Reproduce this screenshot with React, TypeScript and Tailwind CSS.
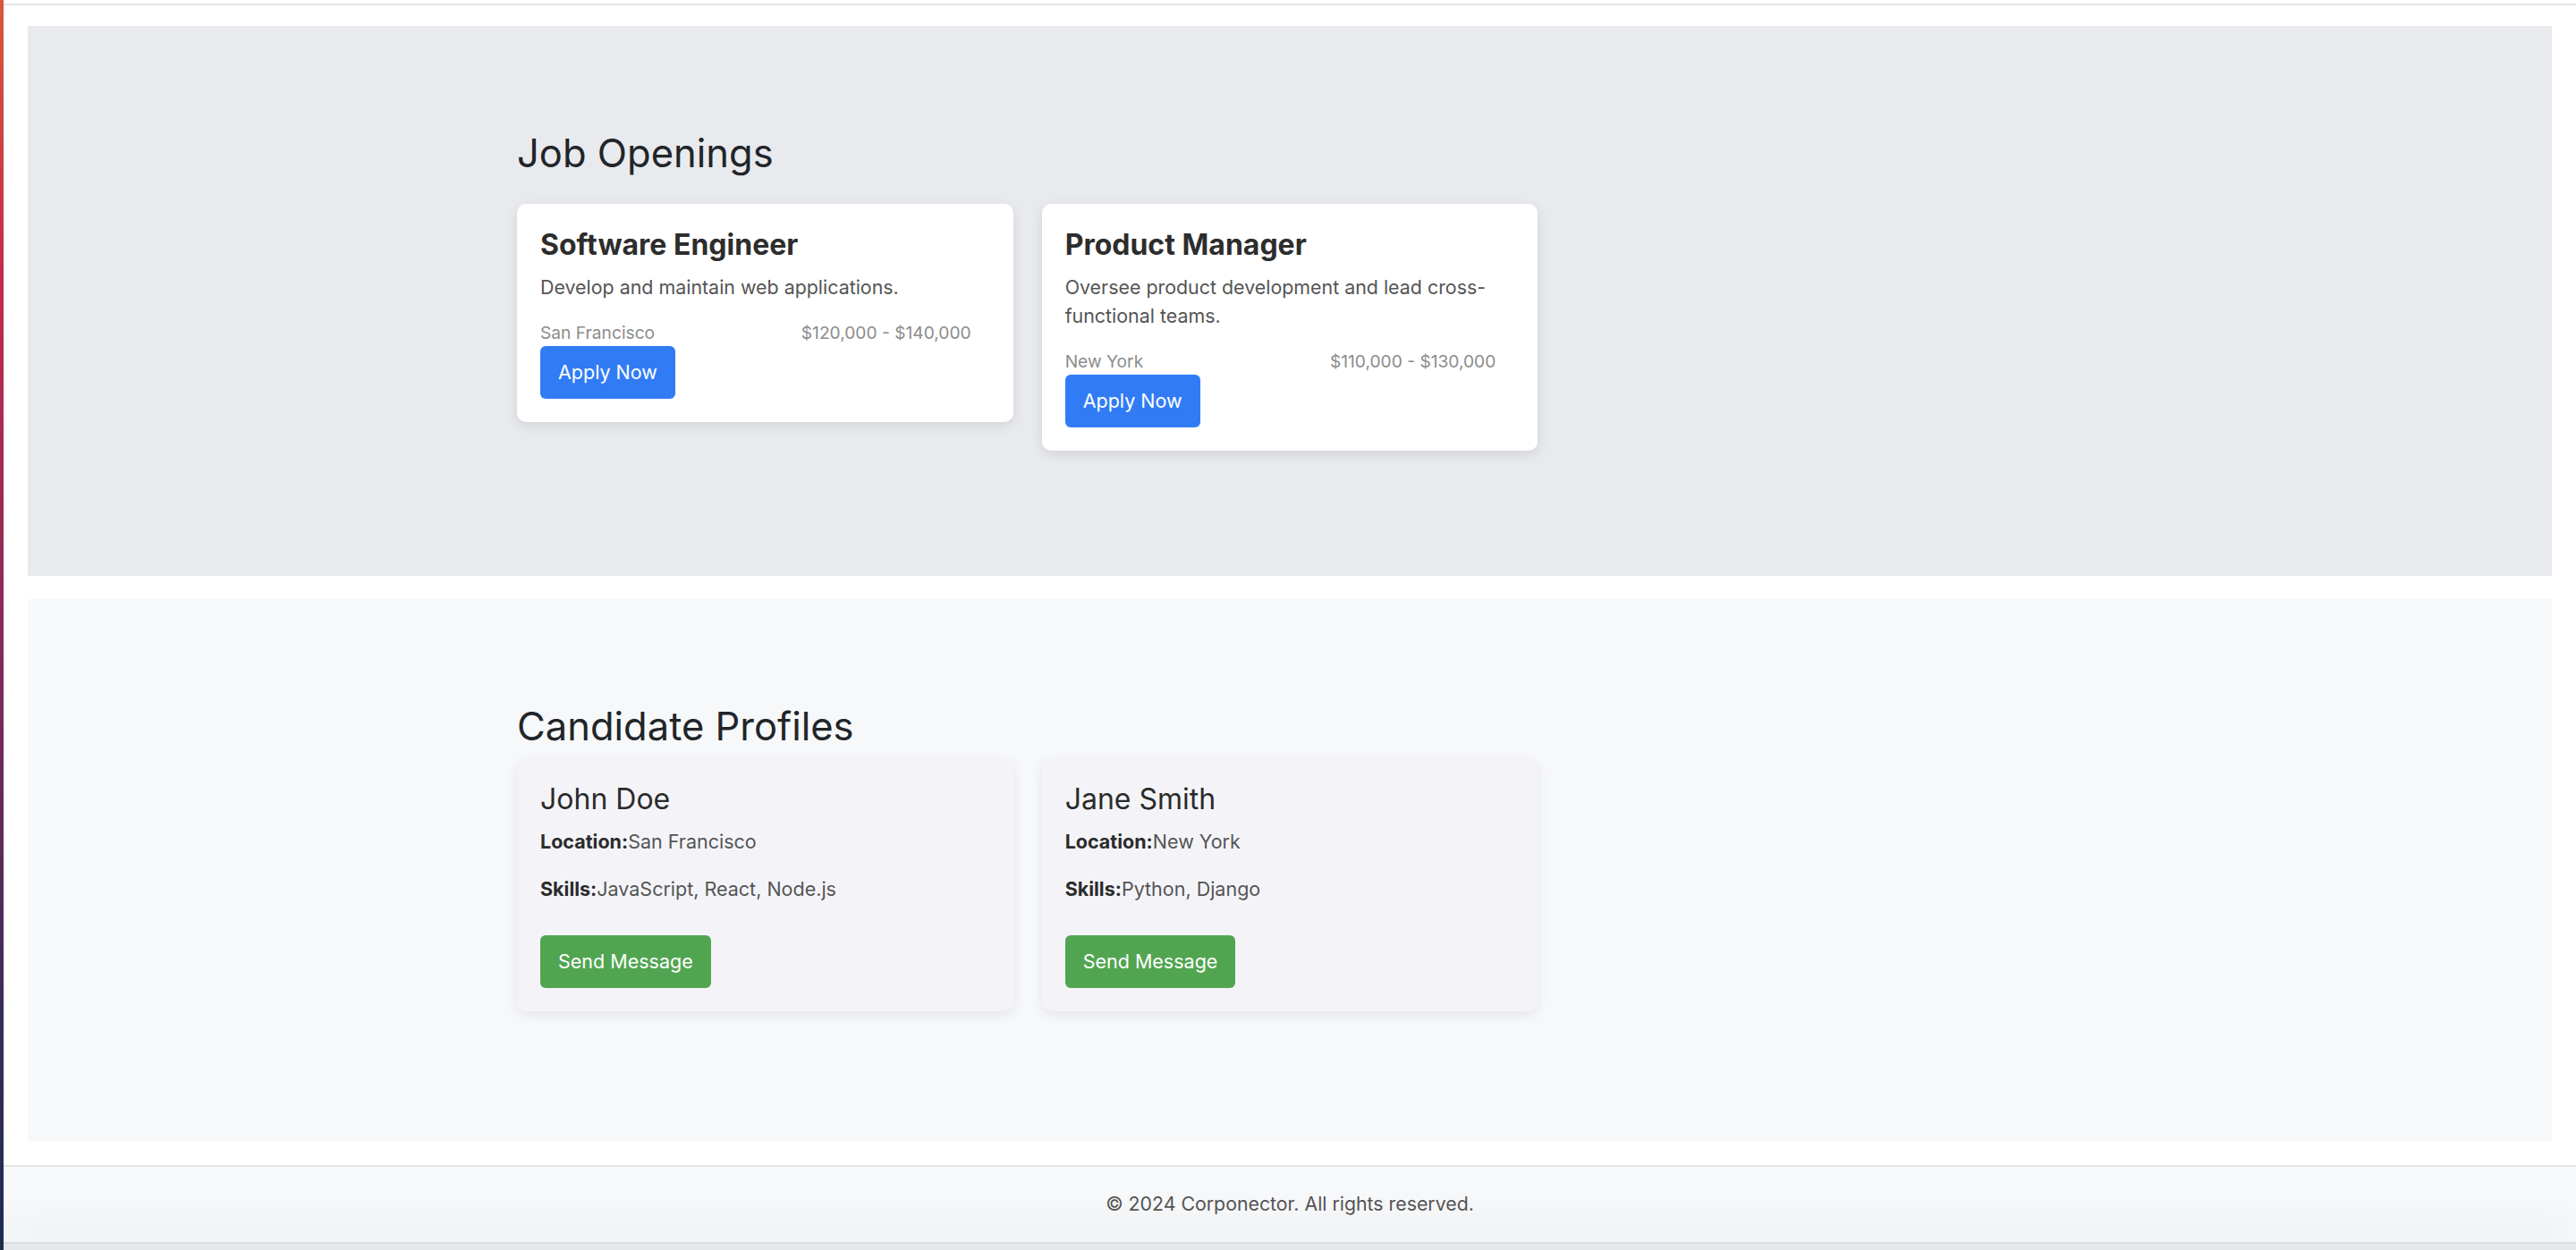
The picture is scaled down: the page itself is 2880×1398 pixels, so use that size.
const jobs = [
  {
    title: 'Software Engineer',
    description: 'Develop and maintain web applications.',
    location: 'San Francisco',
    salary: '$120,000 - $140,000',
  },
  {
    title: 'Product Manager',
    description: 'Oversee product development and lead cross-functional teams.',
    location: 'New York',
    salary: '$110,000 - $130,000',
  },
];

const candidates = [
  { name: 'John Doe', location: 'San Francisco', skills: 'JavaScript, React, Node.js' },
  { name: 'Jane Smith', location: 'New York', skills: 'Python, Django' },
];

export default function App() {
  return (
    <div className="flex min-h-[1398px] bg-white font-['Inter','Noto_Sans',sans-serif]">
      {/* window edge */}
      <div className="w-[4px] shrink-0 bg-[linear-gradient(to_bottom,#d65a3a_0%,#c52a4c_22%,#7d2a5c_55%,#3b2c5a_80%,#1e2e4e_100%)]" />

      <div className="flex-1 flex flex-col">
        <div className="h-[6px] border-b-2 border-[#e4e4e6]" />

        {/* Job openings */}
        <section className="mx-[27px] mt-[23px] bg-[#e9eaee] pt-[116px] pb-[140px]">
          <div className="w-[1728px] mx-auto">
            <h2 className="text-[43.5px] leading-[53px] font-normal text-[#212529]">Job Openings</h2>
            <div className="mt-[30px] grid grid-cols-3 gap-[32px] items-start">
              {jobs.map((job) => (
                <div
                  key={job.title}
                  className="bg-white rounded-[10px] p-[26px] shadow-[0_4px_14px_rgba(0,0,0,0.1)]"
                >
                  <h3 className="text-[32px] leading-[40px] font-bold text-[#2d2d2d]">{job.title}</h3>
                  <p className="mt-[11px] text-[21.4px] leading-[32px] text-[#555]">{job.description}</p>
                  <div className="mt-[21px] flex justify-between pr-[21px] text-[19.2px] leading-[28px] text-[#8c8c8c]">
                    <span>{job.location}</span>
                    <span>{job.salary}</span>
                  </div>
                  <button className="mt-[1px] h-[59px] px-[20px] rounded-[6px] bg-[#317cf5] text-white text-[21.5px]">
                    Apply Now
                  </button>
                </div>
              ))}
            </div>
          </div>
        </section>

        {/* Candidate profiles */}
        <section className="mx-[27px] mt-[26px] bg-[#f7f8fa] pt-[116px] pb-[145px]">
          <div className="w-[1728px] mx-auto">
            <h2 className="text-[43.5px] leading-[53px] font-normal text-[#212529]">Candidate Profiles</h2>
            <div className="mt-[10px] grid grid-cols-3 gap-[32px] items-start">
              {candidates.map((c) => (
                <div
                  key={c.name}
                  className="bg-[#f4f4f8] rounded-[10px] p-[26px] shadow-[0_4px_14px_rgba(0,0,0,0.08)]"
                >
                  <h3 className="text-[32px] leading-[37px] text-[#2b2b2b]">{c.name}</h3>
                  <p className="mt-[13px] text-[21.5px] leading-[32px] text-[#555]">
                    <span className="font-bold text-[#2b2b2b]">Location:</span>
                    {c.location}
                  </p>
                  <p className="mt-[21px] text-[21.5px] leading-[32px] text-[#555]">
                    <span className="font-bold text-[#2b2b2b]">Skills:</span>
                    {c.skills}
                  </p>
                  <button className="mt-[36px] h-[59px] px-[20px] rounded-[6px] bg-[#51a551] text-white text-[21.5px]">
                    Send Message
                  </button>
                </div>
              ))}
            </div>
          </div>
        </section>

        <footer className="mt-[27px] h-[86px] border-t-2 border-[#e3e4e6] bg-[#f7f8fa] flex items-center justify-center">
          <p className="text-[21.3px] text-[#555]">© 2024 Corponector. All rights reserved.</p>
        </footer>
        <div className="relative z-10 h-[10px] border-t-2 border-[#dcdde0] bg-[#e6e7ea] shadow-[0_-16px_40px_rgba(0,0,0,0.09)]" />
      </div>
    </div>
  );
}
